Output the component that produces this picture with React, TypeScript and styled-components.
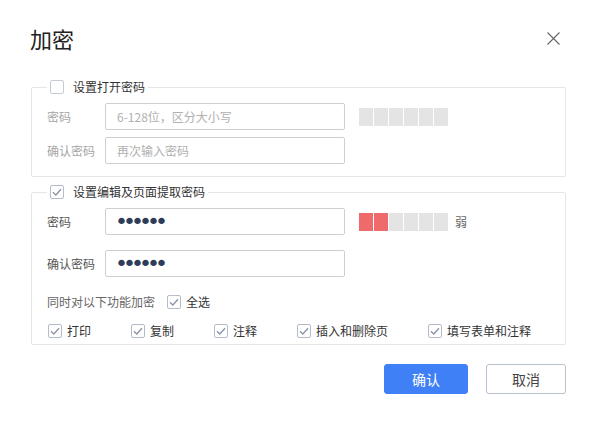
import * as React from "react";
import styled, { createGlobalStyle } from "styled-components";

const GlobalStyle = createGlobalStyle`
  html, body {
    margin: 0;
    padding: 0;
    background: #fff;
  }
  body {
    font-family: "Noto Sans CJK SC", "Noto Sans", sans-serif;
    font-size: 12px;
    color: #333;
  }
`;

const SDialog = styled.div`
  width: 596px;
  height: 425px;
  box-sizing: border-box;
  padding: 0 30px 0 31px;
  background: #fff;
`;

const SHeader = styled.div`
  display: flex;
  align-items: center;
  justify-content: space-between;
  height: 80px;
  box-sizing: border-box;
`;

const STitle = styled.h1`
  margin: 0 0 0 -1px;
  font-size: 22px;
  font-weight: 400;
  color: #222;
  line-height: 30px;
  padding-bottom: 4px;
`;

const SClose = styled.button`
  width: 14px;
  height: 14px;
  padding: 0;
  margin: 0 6px 4px 0;
  border: 0;
  background: none;
  display: flex;
  align-items: center;
  justify-content: center;
  cursor: pointer;
`;

const SFieldset = styled.fieldset<{ $pb?: number }>`
  margin: 0;
  min-width: 0;
  border: 1px solid #e6e6e6;
  border-radius: 2px;
  padding: 9px 15px ${({ $pb }) => $pb ?? 12}px 15px;
  display: flex;
  flex-direction: column;
  & + & {
    margin-top: 8px;
  }
`;

const SLegend = styled.legend`
  padding: 0 3px;
  margin: 0;
  display: flex;
  align-items: center;
  gap: 9px;
  height: 14px;
  line-height: 14px;
  color: #333;
`;

const SBox = styled.span<{ $disabled?: boolean }>`
  width: 12px;
  height: 12px;
  flex: none;
  border: 1px solid ${({ $disabled }) => ($disabled ? "#c4cad6" : "#b4bccb")};
  border-radius: 2px;
  background: #fff;
  display: inline-flex;
  align-items: center;
  justify-content: center;
`;

const SRow = styled.div<{ $mt?: number }>`
  display: flex;
  align-items: center;
  margin-top: ${({ $mt }) => $mt ?? 0}px;
`;

const SLabel = styled.label<{ $disabled?: boolean }>`
  width: 58px;
  flex: none;
  color: ${({ $disabled }) => ($disabled ? "#a6a6a6" : "#555")};
`;

const SInput = styled.input`
  width: 240px;
  height: 27px;
  box-sizing: border-box;
  border: 1px solid #cfcfcf;
  border-radius: 2px;
  padding: 0 11px;
  font-family: "Noto Sans CJK SC", "Noto Sans", sans-serif;
  font-size: 12px;
  color: #2b3a55;
  outline: none;
  background: #fff;
  &::placeholder {
    color: #b0b0b0;
  }
  &[type="password"] {
    padding: 0 9px;
    font-family: "DejaVu Sans", sans-serif;
    font-size: 22px;
    line-height: 25px;
    letter-spacing: -5px;
    color: #2d3c58;
  }
`;

const SStrength = styled.div`
  display: flex;
  gap: 1px;
  margin-left: 14px;
`;

const SSegment = styled.span<{ $on?: boolean }>`
  width: 14px;
  height: 18px;
  background: ${({ $on }) => ($on ? "#ef6b6b" : "#e4e4e4")};
`;

const SLevel = styled.span`
  margin-left: 7px;
  color: #666;
`;

const SHint = styled.span`
  color: #666;
  margin-right: 12px;
  line-height: 14px;
`;

const SCheck = styled.label`
  display: inline-flex;
  align-items: center;
  gap: 5px;
  color: #333;
  line-height: 14px;
`;

const SOptions = styled.div`
  display: flex;
  gap: 40px;
  margin-top: 15px;
  padding-left: 1px;
`;

const SFooter = styled.div`
  display: flex;
  justify-content: flex-end;
  gap: 18px;
  margin-top: 19px;
`;

const SButton = styled.button<{ $primary?: boolean }>`
  height: 30px;
  width: ${({ $primary }) => ($primary ? 84 : 80)}px;
  border-radius: 3px;
  font-family: "Noto Sans CJK SC", "Noto Sans", sans-serif;
  font-size: 14px;
  cursor: pointer;
  border: 1px solid ${({ $primary }) => ($primary ? "#3f80f6" : "#b8c1cf")};
  background: ${({ $primary }) => ($primary ? "#3f80f6" : "#fff")};
  color: ${({ $primary }) => ($primary ? "#fff" : "#444")};
`;

const Check = ({ checked, disabled }: { checked?: boolean; disabled?: boolean }) => (
  <SBox $disabled={disabled}>
    {checked && (
      <svg width="10" height="8" viewBox="0 0 10 8">
        <path d="M1 4.2 L3.8 7 L9 1.2" fill="none" stroke="#8a93a6" strokeWidth="1.3" />
      </svg>
    )}
  </SBox>
);

const CloseIcon = () => (
  <svg width="13" height="13" viewBox="0 0 13 13">
    <path d="M0.5 0.5 L12.5 12.5 M12.5 0.5 L0.5 12.5" stroke="#666" strokeWidth="1.1" />
  </svg>
);

const Strength = ({ level }: { level: number }) => (
  <SStrength>
    {[0, 1, 2, 3, 4, 5].map((i) => (
      <SSegment key={i} $on={i < level} />
    ))}
  </SStrength>
);

const features = ["打印", "复制", "注释", "插入和删除页", "填写表单和注释"];

const App = () => (
  <>
    <GlobalStyle />
    <SDialog>
      <SHeader>
        <STitle>加密</STitle>
        <SClose aria-label="关闭">
          <CloseIcon />
        </SClose>
      </SHeader>

      <SFieldset>
        <SLegend>
          <Check disabled />
          设置打开密码
        </SLegend>
        <SRow>
          <SLabel $disabled>密码</SLabel>
          <SInput placeholder="6-128位，区分大小写" disabled />
          <Strength level={0} />
        </SRow>
        <SRow $mt={7}>
          <SLabel $disabled>确认密码</SLabel>
          <SInput placeholder="再次输入密码" disabled />
        </SRow>
      </SFieldset>

      <SFieldset $pb={6}>
        <SLegend>
          <Check checked />
          设置编辑及页面提取密码
        </SLegend>
        <SRow>
          <SLabel>密码</SLabel>
          <SInput type="password" defaultValue="123456" readOnly />
          <Strength level={2} />
          <SLevel>弱</SLevel>
        </SRow>
        <SRow $mt={15}>
          <SLabel>确认密码</SLabel>
          <SInput type="password" defaultValue="123456" readOnly />
        </SRow>
        <SRow $mt={18}>
          <SHint>同时对以下功能加密</SHint>
          <SCheck>
            <Check checked />
            全选
          </SCheck>
        </SRow>
        <SOptions>
          {features.map((f) => (
            <SCheck key={f}>
              <Check checked />
              {f}
            </SCheck>
          ))}
        </SOptions>
      </SFieldset>

      <SFooter>
        <SButton $primary>确认</SButton>
        <SButton>取消</SButton>
      </SFooter>
    </SDialog>
  </>
);

export default App;
